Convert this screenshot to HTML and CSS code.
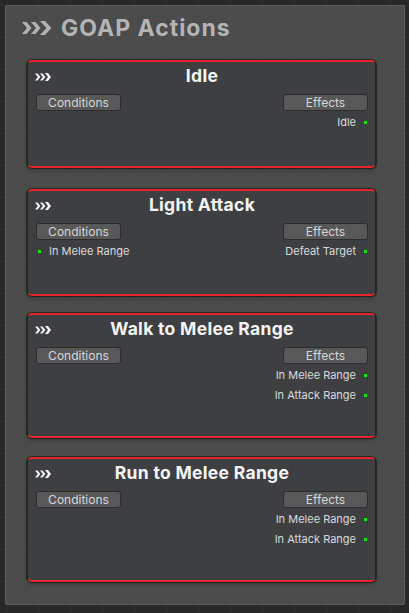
FILE: index.html
```html
<!DOCTYPE html>
<html lang="en">
<head>
<meta charset="utf-8">
<title>GOAP Actions</title>
<link rel="stylesheet" href="styles.css">
</head>
<body>
<section class="panel">
  <header class="panel-head">
    <svg class="panel-icon" width="30" height="14" viewBox="0 0 30 14" aria-hidden="true">
      <polygon points="0,1 4.5,1 9.5,7 4.5,13 0,13 5,7"/>
      <polygon points="9,1 13.5,1 18.5,7 13.5,13 9,13 14,7"/>
      <polygon points="18,0 23,0 29.5,7 23,14 18,14 24.5,7"/>
    </svg>
    <h1 class="panel-title">GOAP Actions</h1>
  </header>

  <div class="nodes">
    <article class="node node--one">
      <div class="node-head">
        <svg class="node-icon" width="16" height="8" viewBox="0 0 16 8" aria-hidden="true">
          <polygon points="0,0.5 2.6,0.5 5.4,4 2.6,7.5 0,7.5 2.8,4"/>
          <polygon points="5,0.5 7.6,0.5 10.4,4 7.6,7.5 5,7.5 7.8,4"/>
          <polygon points="10,0 13,0 16,4 13,8 10,8 13,4"/>
        </svg>
        <h2 class="node-title">Idle</h2>
      </div>
      <div class="ports">
        <div class="col col-in">
          <button class="port-btn">Conditions</button>
        </div>
        <div class="col col-out">
          <button class="port-btn">Effects</button>
          <div class="item item-out"><span>Idle</span><i class="dot"></i></div>
        </div>
      </div>
    </article>

    <article class="node node--two">
      <div class="node-head">
        <svg class="node-icon" width="16" height="8" viewBox="0 0 16 8" aria-hidden="true">
          <polygon points="0,0.5 2.6,0.5 5.4,4 2.6,7.5 0,7.5 2.8,4"/>
          <polygon points="5,0.5 7.6,0.5 10.4,4 7.6,7.5 5,7.5 7.8,4"/>
          <polygon points="10,0 13,0 16,4 13,8 10,8 13,4"/>
        </svg>
        <h2 class="node-title">Light Attack</h2>
      </div>
      <div class="ports">
        <div class="col col-in">
          <button class="port-btn">Conditions</button>
          <div class="item item-in"><i class="dot"></i><span>In Melee Range</span></div>
        </div>
        <div class="col col-out">
          <button class="port-btn">Effects</button>
          <div class="item item-out"><span>Defeat Target</span><i class="dot"></i></div>
        </div>
      </div>
    </article>

    <article class="node node--three">
      <div class="node-head">
        <svg class="node-icon" width="16" height="8" viewBox="0 0 16 8" aria-hidden="true">
          <polygon points="0,0.5 2.6,0.5 5.4,4 2.6,7.5 0,7.5 2.8,4"/>
          <polygon points="5,0.5 7.6,0.5 10.4,4 7.6,7.5 5,7.5 7.8,4"/>
          <polygon points="10,0 13,0 16,4 13,8 10,8 13,4"/>
        </svg>
        <h2 class="node-title">Walk to Melee Range</h2>
      </div>
      <div class="ports">
        <div class="col col-in">
          <button class="port-btn">Conditions</button>
        </div>
        <div class="col col-out">
          <button class="port-btn">Effects</button>
          <div class="item item-out"><span>In Melee Range</span><i class="dot"></i></div>
          <div class="item item-out"><span>In Attack Range</span><i class="dot"></i></div>
        </div>
      </div>
    </article>

    <article class="node node--four">
      <div class="node-head">
        <svg class="node-icon" width="16" height="8" viewBox="0 0 16 8" aria-hidden="true">
          <polygon points="0,0.5 2.6,0.5 5.4,4 2.6,7.5 0,7.5 2.8,4"/>
          <polygon points="5,0.5 7.6,0.5 10.4,4 7.6,7.5 5,7.5 7.8,4"/>
          <polygon points="10,0 13,0 16,4 13,8 10,8 13,4"/>
        </svg>
        <h2 class="node-title">Run to Melee Range</h2>
      </div>
      <div class="ports">
        <div class="col col-in">
          <button class="port-btn">Conditions</button>
        </div>
        <div class="col col-out">
          <button class="port-btn">Effects</button>
          <div class="item item-out"><span>In Melee Range</span><i class="dot"></i></div>
          <div class="item item-out"><span>In Attack Range</span><i class="dot"></i></div>
        </div>
      </div>
    </article>
  </div>
</section>
</body>
</html>
```

FILE: styles.css
```css
* { box-sizing: border-box; }

html, body {
  margin: 0;
  padding: 0;
  width: 409px;
  height: 613px;
  overflow: hidden;
}

body {
  font-family: Inter, "Noto Sans", sans-serif;
  background-color: #282828;
  background-image:
    linear-gradient(to right, #313131 1px, transparent 1px),
    linear-gradient(to bottom, #313131 1px, transparent 1px);
  background-size: 32px 32px;
  background-position: 6px 5px;
  padding: 5px 0 0 5px;
}

.panel {
  width: 400px;
  height: 600px;
  border: 1px solid #5d5d5d;
  border-radius: 2px;
  background: rgba(104, 104, 104, 0.55);
  padding: 9px 0 0 21px;
}

.panel-head {
  display: flex;
  align-items: center;
  height: 26px;
  margin-left: -5px;
  gap: 9px;
}

.panel-icon {
  fill: #b2b2b2;
  flex: none;
}

.panel-title {
  margin: 0;
  font-size: 23px;
  line-height: 26px;
  font-weight: 700;
  color: #b4b4b4;
  letter-spacing: 1px;
}

.nodes {
  display: flex;
  flex-direction: column;
  margin-top: 19px;
  width: 349px;
}

.node {
  background: #3e3f43;
  border-top: 2px solid #e3262b;
  border-bottom: 2px solid #e3262b;
  border-left: 1px solid #252528;
  border-right: 1px solid #252528;
  border-radius: 5px;
  box-shadow: 0 0 0 1px rgba(20, 20, 20, 0.6), 0 2px 4px rgba(0, 0, 0, 0.25);
  padding: 0 7px 0 8px;
}

.node--one { height: 108px; }
.node--two { height: 107px; margin-top: 21px; }
.node--three { height: 125px; margin-top: 17px; }
.node--four { height: 125px; margin-top: 19px; }

.node-head {
  display: grid;
  grid-template-columns: 1fr auto 1fr;
  align-items: center;
  padding: 4px 0 8px;
  height: 32px;
}

.node-icon {
  fill: #f2f2f2;
  margin-left: -1px;
  margin-top: 2px;
}

.node-title {
  margin: 0;
  font-size: 17.5px;
  line-height: 20px;
  font-weight: 700;
  color: #f4f4f4;
  text-align: center;
  white-space: nowrap;
  letter-spacing: 0.3px;
}

.ports {
  display: flex;
  justify-content: space-between;
}

.col {
  display: flex;
  flex-direction: column;
}

.col-out { align-items: flex-end; }
.col-in { align-items: flex-start; }

.port-btn {
  width: 85px;
  height: 17px;
  margin: 0;
  padding: 0;
  border: 1px solid #2c2c2c;
  border-radius: 3px;
  background: #585858;
  color: #d6d6d6;
  font-family: Inter, "Noto Sans", sans-serif;
  font-size: 12px;
  line-height: 15px;
}

.item {
  display: flex;
  align-items: center;
  height: 20px;
  gap: 7px;
  font-size: 11px;
  color: #dadada;
  margin-top: 1px;
}

.item + .item { margin-top: 0; }

.item-in { margin-left: 1px; }

.dot {
  display: block;
  width: 5px;
  height: 5px;
  background: #1be01b;
  border: 1px solid #165c16;
}
```
